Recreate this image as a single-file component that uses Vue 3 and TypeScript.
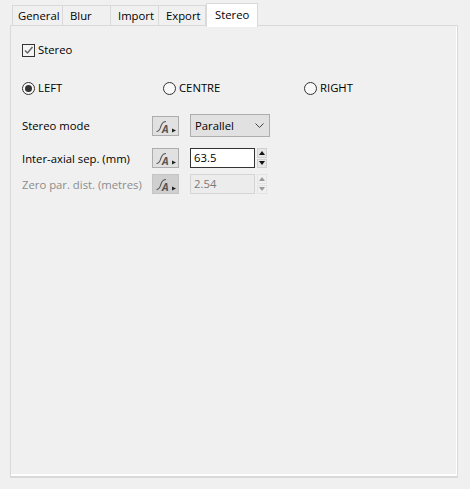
<script setup lang="ts">
import { ref } from 'vue'

interface Tab {
  name: string
  width: number
  pad: number
}

const tabs: Tab[] = [
  { name: 'General', width: 51, pad: 5 },
  { name: 'Blur', width: 48, pad: 7 },
  { name: 'Import', width: 48, pad: 7 },
  { name: 'Export', width: 47, pad: 7 },
  { name: 'Stereo', width: 52, pad: 8 },
]

const activeTab = ref('Stereo')
const stereo = ref(true)
const eye = ref('left')
const mode = ref('Parallel')
const sep = ref('63.5')
</script>

<template>
  <div class="dialog">
    <div class="tabs">
      <div
        v-for="tab in tabs"
        :key="tab.name"
        class="tab"
        :class="{ active: tab.name === activeTab }"
        :style="{ width: tab.width + 'px', paddingLeft: tab.pad + 'px' }"
      >
        {{ tab.name }}
      </div>
    </div>
    <div class="pane">
      <label class="check-row">
        <span class="checkbox">
          <svg v-if="stereo" width="11" height="11" viewBox="0 0 11 11">
            <path d="M2 5.5 L4.5 8 L9.5 2" fill="none" stroke="#666" stroke-width="1.5" />
          </svg>
        </span>
        <span class="text-up">Stereo</span>
      </label>

      <div class="radios">
        <div class="radio-item"><span class="radio" :class="{ on: eye === 'left' }"></span><span class="text-up">LEFT</span></div>
        <div class="radio-item"><span class="radio" :class="{ on: eye === 'centre' }"></span><span class="text-up">CENTRE</span></div>
        <div class="radio-item"><span class="radio" :class="{ on: eye === 'right' }"></span><span class="text-up">RIGHT</span></div>
      </div>

      <div class="form">
        <div class="row row-mode">
          <span class="label">Stereo mode</span>
          <button class="curve-btn">
            <svg width="27" height="20" viewBox="0 0 27 20">
              <path d="M4.5 15.5 C7.5 15.5 8 13 9 10 C10 7 11 5.5 14 5.5" fill="none" stroke="#555" stroke-width="1.1" />
              <text x="10" y="17" class="curve-a">A</text>
              <path d="M20 12.5 L24 14.5 L20 16.5 Z" fill="#222" />
            </svg>
          </button>
          <div class="combo">
            <span>{{ mode }}</span>
            <svg width="9" height="5" viewBox="0 0 9 5">
              <path d="M0.5 0.5 L4.5 4.5 L8.5 0.5" fill="none" stroke="#444" stroke-width="1" />
            </svg>
          </div>
        </div>

        <div class="row row-sep">
          <span class="label">Inter-axial sep. (mm)</span>
          <button class="curve-btn">
            <svg width="27" height="20" viewBox="0 0 27 20">
              <path d="M4.5 15.5 C7.5 15.5 8 13 9 10 C10 7 11 5.5 14 5.5" fill="none" stroke="#555" stroke-width="1.1" />
              <text x="10" y="17" class="curve-a">A</text>
              <path d="M20 12.5 L24 14.5 L20 16.5 Z" fill="#222" />
            </svg>
          </button>
          <div class="spin">
            <div class="spin-input">{{ sep }}</div>
            <div class="spin-arrows">
              <span class="arrow-btn"><i class="up"></i></span>
              <span class="arrow-btn"><i class="down"></i></span>
            </div>
          </div>
        </div>

        <div class="row row-zero disabled">
          <span class="label">Zero par. dist. (metres)</span>
          <button class="curve-btn">
            <svg width="27" height="20" viewBox="0 0 27 20">
              <path d="M4.5 15.5 C7.5 15.5 8 13 9 10 C10 7 11 5.5 14 5.5" fill="none" stroke="#555" stroke-width="1.1" />
              <text x="10" y="17" class="curve-a">A</text>
              <path d="M20 12.5 L24 14.5 L20 16.5 Z" fill="#222" />
            </svg>
          </button>
          <div class="spin">
            <div class="spin-input">2.54</div>
            <div class="spin-arrows">
              <span class="arrow-btn"><i class="up"></i></span>
              <span class="arrow-btn"><i class="down"></i></span>
            </div>
          </div>
        </div>
      </div>
    </div>
  </div>
</template>

<style>
html,
body {
  margin: 0;
  background: #f0f0f0;
}
</style>

<style scoped>
.dialog {
  width: 470px;
  height: 489px;
  box-sizing: border-box;
  padding: 3px 12px 11px 10px;
  display: flex;
  flex-direction: column;
  font-family: "Open Sans", "Noto Sans", sans-serif;
  font-size: 11.3px;
  color: #000;
  background: #f0f0f0;
  overflow: hidden;
}

.tabs {
  display: flex;
  height: 23px;
  padding-left: 2px;
  position: relative;
  z-index: 1;
}

.tab {
  box-sizing: border-box;
  height: 20px;
  margin-top: 2px;
  line-height: 20px;
  background: #f0f0f0;
  border: 1px solid #d9d9d9;
  border-left: 0;
  border-bottom: 0;
}

.tab:first-child {
  border-left: 1px solid #d9d9d9;
}

.tab.active {
  height: 24px;
  margin-top: 0;
  line-height: 21px;
  background: #fff;
  border: 1px solid #d9d9d9;
  border-bottom: 0;
}

.pane {
  flex: 1;
  box-sizing: border-box;
  margin-top: -1px;
  padding: 15px 11px 13px;
  background: #f0f0f0;
  border: 1px solid #d9d9d9;
  border-bottom-width: 2px;
  box-shadow: inset -1px -2px 0 #fff;
}

.check-row {
  display: flex;
  align-items: center;
  gap: 3px;
  height: 18px;
}

.text-up {
  margin-top: -2px;
}

.checkbox {
  box-sizing: border-box;
  width: 13px;
  height: 13px;
  border: 1px solid #333;
  background: #f4f4f4;
  display: block;
}

.checkbox svg {
  display: block;
}

.radios {
  display: grid;
  grid-template-columns: 141px 141px 100px;
  margin-top: 20px;
  height: 18px;
}

.radio-item {
  display: flex;
  align-items: center;
  gap: 3px;
}

.radio {
  box-sizing: border-box;
  width: 13px;
  height: 13px;
  border: 1px solid #333;
  border-radius: 50%;
  background: #f8f8f8;
  display: flex;
  align-items: center;
  justify-content: center;
}

.radio.on::after {
  content: "";
  width: 7px;
  height: 7px;
  border-radius: 50%;
  background: #333;
}

.form {
  margin-top: 17px;
  display: flex;
  flex-direction: column;
}

.row {
  display: flex;
  align-items: center;
}

.row-mode {
  height: 23px;
}

.row-sep {
  height: 22px;
  margin-top: 10px;
}

.row-zero {
  height: 20px;
  margin-top: 5px;
}

.label {
  width: 130px;
  white-space: nowrap;
}

.curve-btn {
  box-sizing: border-box;
  width: 27px;
  height: 20px;
  padding: 0;
  background: #e1e1e1;
  border: 1px solid #adadad;
  display: block;
}

.curve-btn svg {
  display: block;
  margin: -1px;
}

.curve-a {
  font-family: "Open Sans", sans-serif;
  font-size: 10.5px;
  font-weight: 700;
  font-style: italic;
  fill: #555;
}

.combo {
  box-sizing: border-box;
  width: 80px;
  height: 23px;
  margin-left: 11px;
  padding: 0 5px 0 4px;
  background: #e1e1e1;
  border: 1px solid #adadad;
  display: flex;
  align-items: center;
  justify-content: space-between;
}

.spin {
  display: flex;
  margin-left: 11px;
}

.spin-input {
  box-sizing: border-box;
  width: 65px;
  height: 20px;
  padding-left: 3px;
  line-height: 18px;
  background: #fff;
  border: 1px solid #333;
}

.spin-arrows {
  display: flex;
  flex-direction: column;
  gap: 1px;
  margin-left: 2px;
  width: 10px;
}

.arrow-btn {
  height: 9.5px;
  background: #e6e6e6;
  border: 1px solid #d0d0d0;
  box-sizing: border-box;
  display: flex;
  align-items: center;
  justify-content: center;
}

.arrow-btn i {
  width: 0;
  height: 0;
  border-left: 3.5px solid transparent;
  border-right: 3.5px solid transparent;
}

.arrow-btn i.up {
  border-bottom: 4px solid #111;
}

.arrow-btn i.down {
  border-top: 4px solid #111;
}

.disabled .label {
  color: #8c8c8c;
}

.disabled .curve-btn {
  background: #cfcfcf;
  border-color: #c4c4c4;
}

.disabled .spin-input {
  background: #ececec;
  border-color: #d4d4d4;
  color: #7a7a7a;
}

.disabled .arrow-btn {
  background: #f0f0f0;
  border-color: #e4e4e4;
}

.disabled .arrow-btn i.up {
  border-bottom-color: #9a9a9a;
}

.disabled .arrow-btn i.down {
  border-top-color: #9a9a9a;
}
</style>
